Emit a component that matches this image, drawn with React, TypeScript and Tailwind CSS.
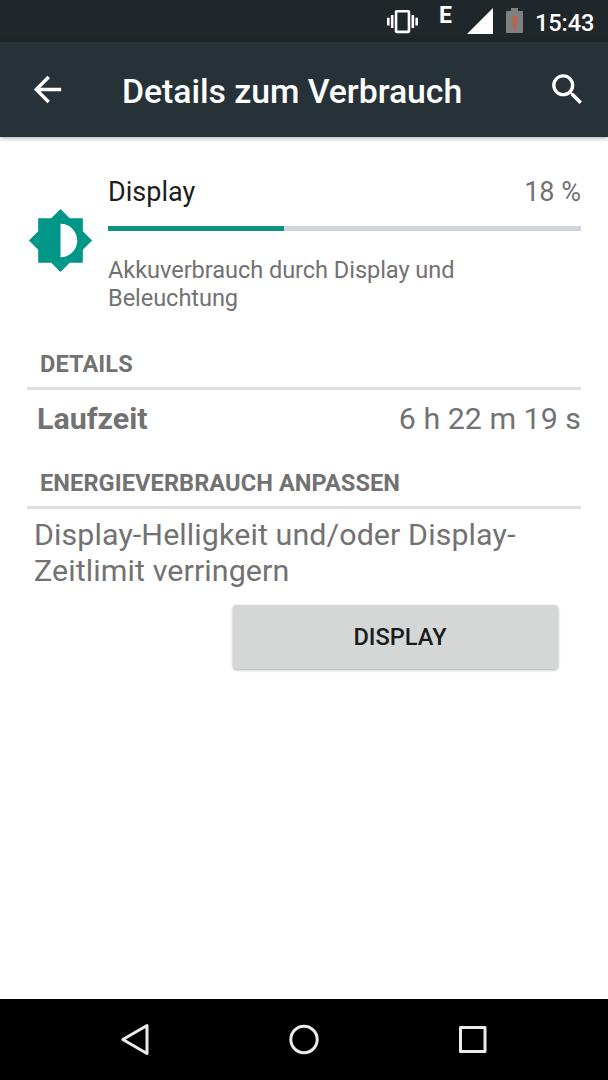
import React from 'react';

type SectionHeaderProps = { title: string };

const VibrateIcon: React.FC = () => (
  <svg viewBox="0 0 24 24" className="w-[31px] h-[31px]" fill="currentColor">
    <path d="M0 15h2V9H0v6zm3 2h2V7H3v10zm19-8v6h2V9h-2zm-3 8h2V7h-2v10zM16.5 3h-9C6.67 3 6 3.67 6 4.5v15c0 .83.67 1.5 1.5 1.5h9c.83 0 1.5-.67 1.5-1.5v-15c0-.83-.67-1.5-1.5-1.5zM16 19H8V5h8v14z" />
  </svg>
);

const SignalIcon: React.FC = () => (
  <svg viewBox="0 0 26 26" className="w-[26px] h-[26px]" fill="currentColor">
    <path d="M0 26h26V0z" />
  </svg>
);

const BatteryIcon: React.FC = () => (
  <svg viewBox="0 0 17 25" className="w-[17px] h-[25px]">
    <path fill="#7f8181" d="M1 3h4V0h7v3h4a1 1 0 0 1 1 1v20a1 1 0 0 1-1 1H1a1 1 0 0 1-1-1V4a1 1 0 0 1 1-1z" />
    <path fill="#b5664f" d="M6 8h5.500l-.7 9H6.700zM6.800 17h3.600v3.500l-1.800 2.500l-1.800-2.500z" />
  </svg>
);

const BackIcon: React.FC = () => (
  <svg viewBox="0 0 24 24" className="w-[41px] h-[41px]" fill="currentColor">
    <path d="M20 11H7.830l5.590-5.590L12 4l-8 8 8 8 1.410-1.410L7.830 13H20v-2z" />
  </svg>
);

const SearchIcon: React.FC = () => (
  <svg viewBox="0 0 24 24" className="w-[41px] h-[41px]" fill="currentColor">
    <path d="M15.5 14h-.79l-.28-.27C15.410 12.590 16 11.110 16 9.500 16 5.910 13.090 3 9.500 3S3 5.910 3 9.500 5.910 16 9.500 16c1.610 0 3.090-.59 4.230-1.570l.27.28v.79l5 4.990L20.490 19l-4.990-5zm-6 0C7.010 14 5 11.990 5 9.500S7.010 5 9.500 5 14 7.010 14 9.500 11.990 14 9.500 14z" />
  </svg>
);

const BrightnessIcon: React.FC = () => (
  <svg viewBox="0 0 24 24" className="w-[67px] h-[67px] text-[#009688]" fill="currentColor">
    <path d="M20 15.310L23.310 12 20 8.690V4h-4.690L12 .69 8.690 4H4v4.690L.69 12 4 15.310V20h4.690L12 23.310 15.310 20H20v-4.690zM12 18V6c3.310 0 6 2.690 6 6s-2.690 6-6 6z" />
  </svg>
);

const StatusBar: React.FC = () => (
  <div className="h-[42px] bg-[#20272b] text-white flex items-start shrink-0 pl-[387px]">
    <div className="pt-[5.5px]"><VibrateIcon /></div>
    <span className="ml-[21px] mt-[2px] w-[15px] text-[23px] leading-[28px] font-bold">E</span>
    <div className="ml-[13px] pt-[8px]"><SignalIcon /></div>
    <div className="ml-[13px] pt-[8px]"><BatteryIcon /></div>
    <span className="ml-[12px] mt-[9px] text-[23.6px] leading-[28px] font-medium tracking-[-0.1px]">15:43</span>
  </div>
);

const AppBar: React.FC = () => (
  <div className="relative h-[95px] bg-[#263238] text-white flex items-center shrink-0 pl-[27px] pr-[20px] shadow-[0_1px_5px_rgba(0,0,0,0.35)]">
    <button aria-label="Zurück"><BackIcon /></button>
    <h1 className="ml-[54px] mt-[5px] flex-1 text-[33.8px] leading-[40px] font-medium tracking-[-0.05px] whitespace-nowrap">Details zum Verbrauch</h1>
    <button aria-label="Suche"><SearchIcon /></button>
  </div>
);

const SectionHeader: React.FC<SectionHeaderProps> = ({ title }) => (
  <div className="ml-[27px] mr-[27px] h-[40px] border-b-[3px] border-[#dedede]">
    <h2 className="pl-[13px] text-[23.6px] leading-[28px] font-bold tracking-[0.07px]">{title}</h2>
  </div>
);

const App: React.FC = () => {
  const percent = 18;
  // the bar is scaled against the battery drained so far, not against 100 %
  const barWidth = 37.2;

  return (
    <div className="w-[608px] h-[1080px] flex flex-col overflow-hidden bg-white text-[#727272] font-[Roboto,sans-serif]">
      <StatusBar />
      <AppBar />

      <main className="flex-1 flex flex-col">
        <div className="flex pl-[27px] pr-[27px] pt-[39px]">
          <div className="mt-[31px] shrink-0"><BrightnessIcon /></div>
          <div className="ml-[14px] flex-1">
            <div className="flex justify-between text-[27px] leading-[32px]">
              <span className="text-[#1c1c1c]">Display</span>
              <span>{percent} %</span>
            </div>
            <div className="mt-[18px] h-[5px] bg-[#cfd5dd]">
              <div className="h-full bg-[#0b9380]" style={{ width: `${barWidth}%` }} />
            </div>
            <p className="mt-[25px] w-[400px] text-[23.6px] leading-[28px] tracking-[-0.07px]">
              Akkuverbrauch durch Display und Beleuchtung
            </p>
          </div>
        </div>

        <div className="mt-[38px]">
          <SectionHeader title="DETAILS" />
        </div>
        <div className="mt-[11px] flex justify-between pl-[37px] pr-[27px] text-[30.4px] leading-[36px]">
          <span className="font-bold">Laufzeit</span>
          <span>6 h 22 m 19 s</span>
        </div>

        <div className="mt-[32px]">
          <SectionHeader title="ENERGIEVERBRAUCH ANPASSEN" />
        </div>
        <p className="mt-[8px] pl-[34px] w-[560px] text-[30.4px] leading-[36px] tracking-[0.1px]">
          Display-Helligkeit und/oder Display-Zeitlimit verringern
        </p>
        <button className="mt-[16px] ml-[233px] w-[325px] h-[64px] pl-[9px] pt-[2px] rounded-[4px] bg-[#d5d7d6] text-[#1a1d1d] text-[23.6px] font-medium shadow-[0_1px_3px_rgba(0,0,0,0.35)]">
          DISPLAY
        </button>
      </main>

      <nav className="h-[81px] bg-black shrink-0 flex justify-center items-center gap-[129px] text-[#ececec]">
        <svg viewBox="0 0 40 40" className="w-[40px] h-[40px]" fill="none" stroke="currentColor" strokeWidth="3" strokeLinejoin="round">
          <path d="M7.800 19.500L32 5.500V33.500z" />
        </svg>
        <svg viewBox="0 0 40 40" className="w-[40px] h-[40px]" fill="none" stroke="currentColor" strokeWidth="3">
          <circle cx="20" cy="19.500" r="13.200" />
        </svg>
        <svg viewBox="0 0 40 40" className="w-[40px] h-[40px]" fill="none" stroke="currentColor" strokeWidth="3" strokeLinejoin="round">
          <rect x="7.500" y="7.500" width="24.500" height="24" />
        </svg>
      </nav>
    </div>
  );
};

export default App;
